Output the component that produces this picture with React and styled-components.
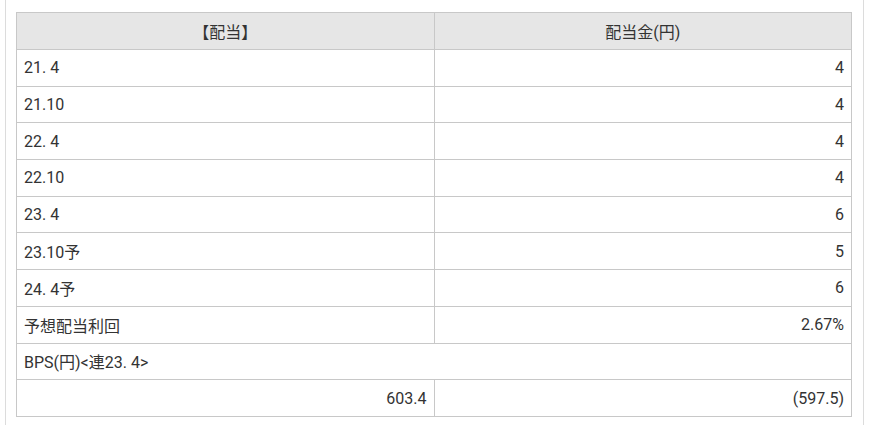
import React from 'react'
import styled, { createGlobalStyle } from 'styled-components'

const GlobalStyle = createGlobalStyle`
  body {
    margin: 0;
    background: #fff;
    font-family: Roboto, "Noto Sans CJK JP", sans-serif;
  }
`;

const Panel = styled.div`
  margin-left: 5px;
  border-left: 1px solid #dcdcdc;
  border-right: 1px solid #dcdcdc;
  padding: 12px 11px 8px 10px;
  box-sizing: border-box;
  width: 859px;
`;

const StyledTable = styled.table`
  width: 836px;
  border-collapse: collapse;
  table-layout: fixed;
  font-size: 16px;
  color: #333;
`;

const StyledTh = styled.th`
  height: 36px;
  padding: 0 7px;
  font-weight: normal;
  text-align: center;
  background: #e6e6e6;
  border: 1px solid #c8c8c8;
`;

const StyledTd = styled.td`
  height: 35.7px;
  padding: 0 7px;
  text-align: ${p => (p.$right ? 'right' : 'left')};
  border: 1px solid #c8c8c8;
  white-space: nowrap;
`;

const rows = [
  ['21. 4', '4'],
  ['21.10', '4'],
  ['22. 4', '4'],
  ['22.10', '4'],
  ['23. 4', '6'],
  ['23.10予', '5'],
  ['24. 4予', '6'],
  ['予想配当利回', '2.67%'],
];

export default function App() {
  return (
    <>
      <GlobalStyle />
      <Panel>
        <StyledTable>
          <thead>
            <tr>
              <StyledTh>【配当】</StyledTh>
              <StyledTh>配当金(円)</StyledTh>
            </tr>
          </thead>
          <tbody>
            {rows.map(([label, value]) => (
              <tr key={label}>
                <StyledTd>{label}</StyledTd>
                <StyledTd $right>{value}</StyledTd>
              </tr>
            ))}
            <tr>
              <StyledTd colSpan={2}>BPS(円)&lt;連23. 4&gt;</StyledTd>
            </tr>
            <tr>
              <StyledTd $right>603.4</StyledTd>
              <StyledTd $right>(597.5)</StyledTd>
            </tr>
          </tbody>
        </StyledTable>
      </Panel>
    </>
  )
}
